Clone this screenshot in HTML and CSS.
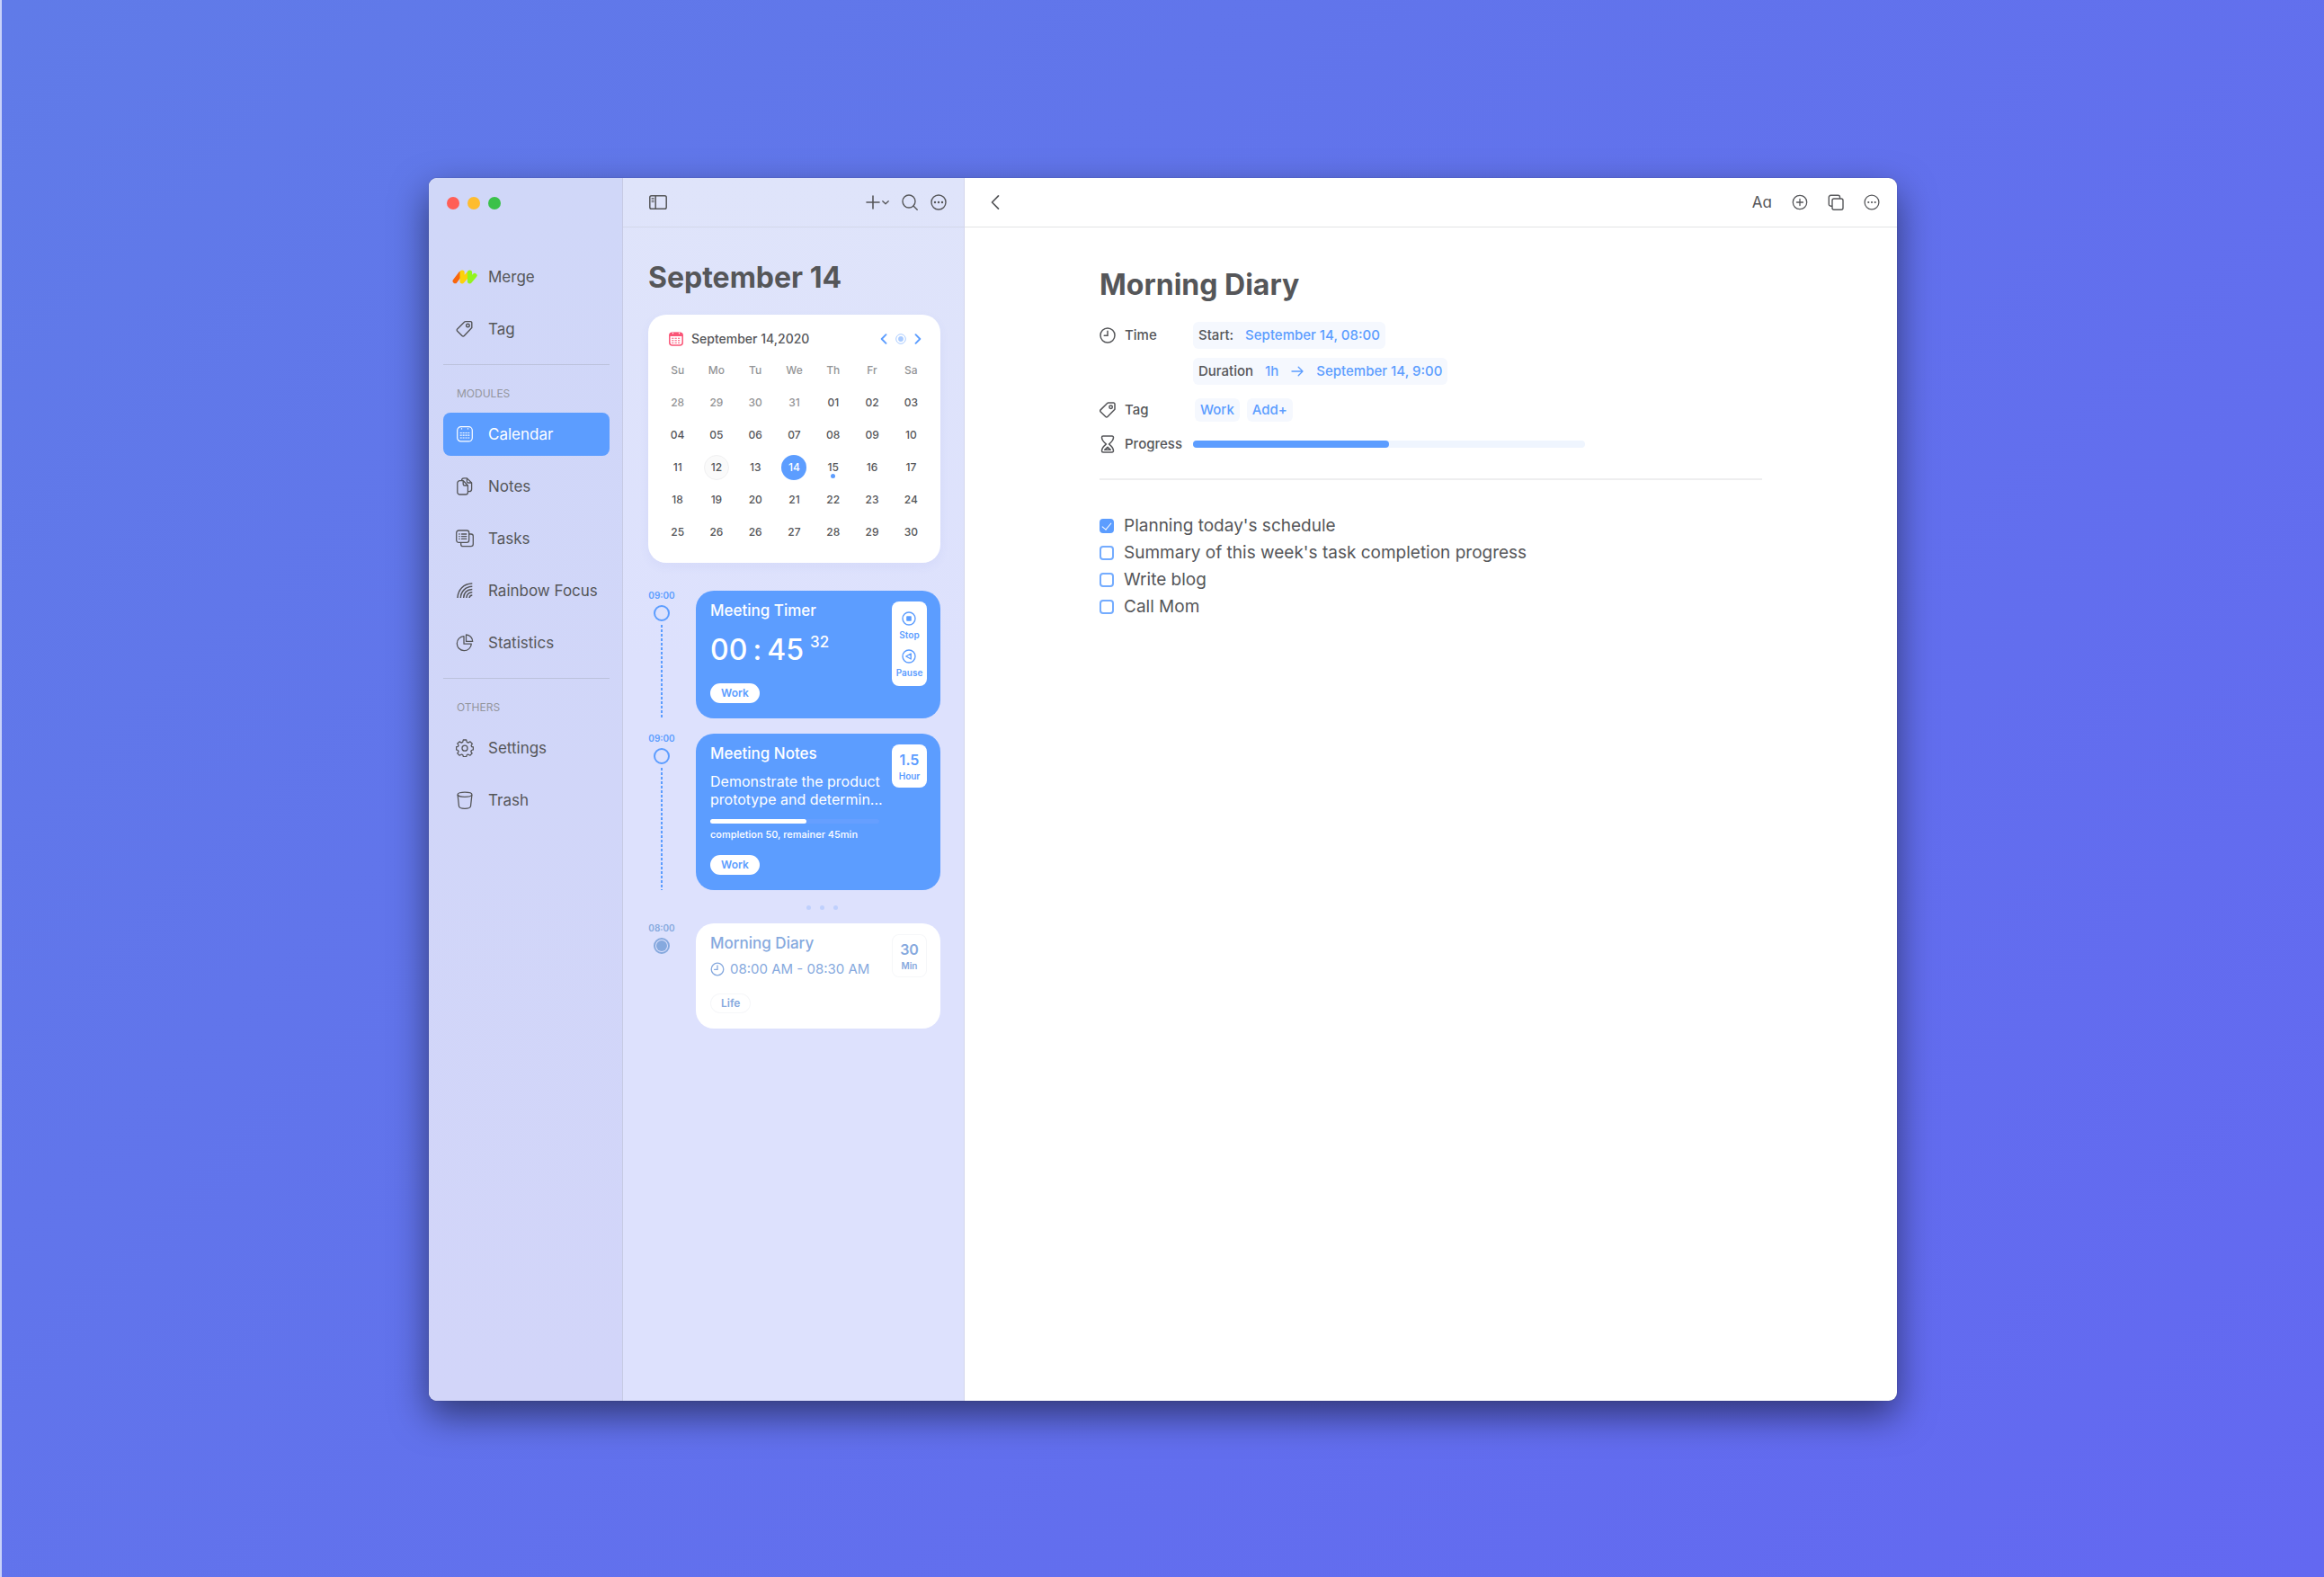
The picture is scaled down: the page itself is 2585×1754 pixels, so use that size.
FILE: index.html
```
<!DOCTYPE html>
<html lang="en">
<head>
<meta charset="utf-8">
<meta name="viewport" content="width=device-width, initial-scale=1">
<title>Morning Diary</title>
<link rel="stylesheet" href="styles.css">
</head>
<body>
<div class="window">
  <aside class="sidebar">
    <div class="window-controls">
      <button class="light light-close" aria-label="Close"></button>
      <button class="light light-minimize" aria-label="Minimize"></button>
      <button class="light light-zoom" aria-label="Zoom"></button>
    </div>
    <nav class="nav">
      <ul class="nav-list">
        <li><a class="nav-item" href="#merge">
          <span class="nav-icon"><svg class="logo" width="28" height="16" viewBox="0 0 28 16" fill="none" stroke-width="5.2" stroke-linecap="round" stroke-linejoin="round"><path stroke="#f9660d" d="M3.2 12.6 9.4 4.4"/><path stroke="#fcd20a" d="M11.1 3v9.8L18.4 4.4"/><path stroke="#93f41f" d="M19.5 3v9.8L25 6.4"/></svg></span>Merge</a></li>
        <li><a class="nav-item" href="#tag">
          <span class="nav-icon"><svg width="20" height="20" viewBox="0 0 20 20" fill="none" stroke="currentColor" stroke-width="1.4" stroke-linejoin="round"><path d="M11 1.6h5.400a1.400 1.400 0 0 1 1.400 1.400v5.600L9.300 17.500a1.600 1.600 0 0 1-2.300 0L1.700 12.200a1.600 1.600 0 0 1 0-2.300L9.700 2.100A1.800 1.800 0 0 1 11 1.600z"/><circle cx="13.400" cy="6" r="1.800"/></svg></span>Tag</a></li>
      </ul>
      <hr class="nav-divider">
      <h2 class="nav-heading">MODULES</h2>
      <ul class="nav-list">
        <li><a class="nav-item nav-item-active" href="#calendar" aria-current="page">
          <span class="nav-icon"><svg width="20" height="20" viewBox="0 0 20 20" fill="none" stroke="currentColor" stroke-width="1.200"><rect x="1.700" y="1.700" width="16.600" height="16.200" rx="4"/><path d="M6.500 3.200v1.400M13.500 3.200v1.400"/><path d="M4.700 8.500h10.600M4.700 11.200h10.600M4.700 14h10.600" stroke-dasharray="2 .9"/></svg></span>Calendar</a></li>
        <li><a class="nav-item" href="#notes">
          <span class="nav-icon"><svg width="20" height="20" viewBox="0 0 20 20" fill="none" stroke="currentColor" stroke-width="1.300" stroke-linejoin="round"><path d="M4.400 3.700h4L13.400 9v7.400a2.600 2.600 0 0 1-2.600 2.600H4.400a2.600 2.600 0 0 1-2.600-2.600V6.300a2.600 2.600 0 0 1 2.600-2.600z"/><path d="M8.200 3.900v3.500A1.600 1.600 0 0 0 9.800 9h3.400"/><path d="M6.500 3.500C6.600 1.900 7.400.9 9 .9h3.400L17.600 6v7c0 1.800-.9 2.700-2.700 2.700h-1.300"/><path d="M12.400 1.100v3.300A1.600 1.600 0 0 0 14 6h3.400"/></svg></span>Notes</a></li>
        <li><a class="nav-item" href="#tasks">
          <span class="nav-icon"><svg width="20" height="20" viewBox="0 0 20 20" fill="none" stroke="currentColor" stroke-width="1.300" stroke-linecap="round"><rect x=".7" y="1" width="14" height="13.400" rx="2.600"/><path d="M14.900 5H17a2.300 2.300 0 0 1 2.300 2.300v9A2.400 2.400 0 0 1 16.900 18.700H8a2.300 2.300 0 0 1-2.300-2.300v-1.800"/><path d="M6.500 5h5.300M6.500 7.700h5.300M6.500 10.400h5.300M3.800 5h.4M3.800 7.700h.4M3.800 10.400h.4"/></svg></span>Tasks</a></li>
        <li><a class="nav-item" href="#rainbow-focus">
          <span class="nav-icon"><svg width="20" height="20" viewBox="0 0 20 20" fill="none" stroke="currentColor" stroke-width="1.500"><path d="M2 18C2.400 9 8.500 2.300 18.300 2"/><path d="M5.300 18C5.700 11 10.500 5.600 18.300 5.300"/><path d="M8.600 18c.4-5.500 4-9.100 9.700-9.400"/><path d="M11.800 18c.3-3.600 2.600-6 6.500-6.200"/><path d="M15 18c.2-1.900 1.400-3 3.300-3.100"/></svg></span>Rainbow Focus</a></li>
        <li><a class="nav-item" href="#statistics">
          <span class="nav-icon"><svg width="20" height="20" viewBox="0 0 20 20" fill="none" stroke="currentColor" stroke-width="1.300" stroke-linejoin="round"><path d="M9 2.700A8 8 0 1 0 17.300 11.200H9z"/><path d="M11.500 1v7.400h7.200A7.500 7.500 0 0 0 11.500 1z"/></svg></span>Statistics</a></li>
      </ul>
      <hr class="nav-divider">
      <h2 class="nav-heading">OTHERS</h2>
      <ul class="nav-list">
        <li><a class="nav-item" href="#settings">
          <span class="nav-icon"><svg width="20" height="20" viewBox="0 0 20 20" fill="none" stroke="currentColor" stroke-width="1.300" stroke-linejoin="round"><path d="M8.300 1h3.400l.6 2.400 1.500.7 2.200-1.200L18.300 5.200 17.100 7.300l.5 1.200 1.800.3v3.100l-2 .6-.6 1.400 1.300 2-2.300 2.300-2.200-1.200-1.300.6-.6 2H8.400l-.6-2-1.400-.6-2.200 1.200-2.400-2.300 1.300-2-.6-1.400L.6 11.900V8.700l1.900-.4.6-1.300-1.300-2L4.100 2.900l2.200 1.200 1.400-.7z"/><circle cx="10" cy="10.200" r="3"/></svg></span>Settings</a></li>
        <li><a class="nav-item" href="#trash">
          <span class="nav-icon"><svg width="20" height="20" viewBox="0 0 20 20" fill="none" stroke="currentColor" stroke-width="1.300"><ellipse cx="10" cy="3.700" rx="7.900" ry="2.600"/><path d="M2.100 3.900 3.500 16.800C3.700 18.600 6 19.300 10 19.300s6.300-.7 6.500-2.500L17.900 3.900"/></svg></span>Trash</a></li>
      </ul>
    </nav>
  </aside>

  <section class="panel">
    <header class="toolbar panel-toolbar">
      <button class="icon-button push-right" aria-label="Toggle sidebar"><svg width="20" height="16" viewBox="0 0 20 16" fill="none" stroke="currentColor" stroke-width="1.500"><rect x=".8" y=".8" width="18.400" height="14.400" rx="1.800"/><path d="M7.200 1v14"/><path stroke-width="1" d="M2.600 3.500h3M2.600 5.500h3M2.600 7.500h3"/></svg></button>
      <button class="icon-button" aria-label="Add"><svg width="26" height="16" viewBox="0 0 26 16" fill="none" stroke="currentColor" stroke-width="1.600" stroke-linecap="round"><path d="M1 8h14M8 1v14"/><path stroke-width="1.300" stroke-linejoin="round" d="m18.800 6.700 3.200 3.100 3.200-3.100"/></svg></button>
      <button class="icon-button" aria-label="Search"><svg width="18" height="18" viewBox="0 0 18 18" fill="none" stroke="currentColor" stroke-width="1.400" stroke-linecap="round"><circle cx="8" cy="8" r="7"/><path d="m13.200 13.200 4 4"/></svg></button>
      <button class="icon-button" aria-label="More"><svg width="18" height="18" viewBox="0 0 18 18" fill="none" stroke="currentColor" stroke-width="1.400"><circle cx="9" cy="9" r="8"/><g fill="currentColor" stroke="none"><circle cx="5" cy="9" r="1.200"/><circle cx="9" cy="9" r="1.200"/><circle cx="13" cy="9" r="1.200"/></g></svg></button>
    </header>
    <div class="panel-body">
      <h1 class="page-title">September 14</h1>

      <section class="calendar">
        <header class="calendar-header">
          <svg width="16" height="16" viewBox="0 0 16 16" fill="none"><rect x=".8" y="1.200" width="14.400" height="13.800" rx="3" stroke="#fa5577" stroke-width="1.500"/><path fill="#fa5577" d="M.8 5V3.200C.8 1.500 1.900.7 3.500.7h9c1.600 0 2.700.8 2.700 2.500V5z"/><path stroke="#fff" stroke-width="1.200" stroke-linecap="round" d="M4.500 1.300v.5M11.500 1.300v.5"/><path stroke="#fa5577" stroke-width="1.100" stroke-dasharray="2.200 1.200" d="M3.200 7.200h9.600M3.200 9.700h9.600M3.200 12.200h9.600"/></svg>
          <h2 class="calendar-title">September 14,2020</h2>
          <button class="icon-button accent" aria-label="Previous month"><svg width="8" height="12" viewBox="0 0 8 12" fill="none" stroke="currentColor" stroke-width="1.900" stroke-linecap="round" stroke-linejoin="round"><path d="M6.500 1.200 1.700 6l4.800 4.800"/></svg></button>
          <button class="icon-button faint" aria-label="Today"><svg width="12" height="12" viewBox="0 0 12 12"><circle cx="6" cy="6" r="5.300" fill="none" stroke="currentColor"/><circle cx="6" cy="6" r="2.900" fill="currentColor"/></svg></button>
          <button class="icon-button accent" aria-label="Next month"><svg width="8" height="12" viewBox="0 0 8 12" fill="none" stroke="currentColor" stroke-width="1.900" stroke-linecap="round" stroke-linejoin="round"><path d="M1.500 1.200 6.300 6l-4.800 4.800"/></svg></button>
        </header>
        <table class="month">
          <thead>
            <tr><th>Su</th><th>Mo</th><th>Tu</th><th>We</th><th>Th</th><th>Fr</th><th>Sa</th></tr>
          </thead>
          <tbody>
            <tr><td class="outside">28</td><td class="outside">29</td><td class="outside">30</td><td class="outside">31</td><td>01</td><td>02</td><td>03</td></tr>
            <tr><td>04</td><td>05</td><td>06</td><td>07</td><td>08</td><td>09</td><td>10</td></tr>
            <tr><td>11</td><td><span class="day day-hover">12</span></td><td>13</td><td><span class="day day-selected">14</span></td><td><span class="day day-event">15</span></td><td>16</td><td>17</td></tr>
            <tr><td>18</td><td>19</td><td>20</td><td>21</td><td>22</td><td>23</td><td>24</td></tr>
            <tr><td>25</td><td>26</td><td>26</td><td>27</td><td>28</td><td>29</td><td>30</td></tr>
          </tbody>
        </table>
      </section>

      <div class="timeline">
        <div class="entry">
          <div class="track"><time class="track-time">09:00</time><span class="track-ring"></span><span class="track-line"></span></div>
          <article class="card">
            <div class="card-main">
              <h3 class="card-title">Meeting Timer</h3>
              <p class="timer"><span>00</span><span class="timer-colon">:</span><span>45</span><span class="timer-seconds">32</span></p>
              <span class="pill">Work</span>
            </div>
            <div class="badge timer-actions">
              <button class="timer-button"><svg width="16" height="16" viewBox="0 0 16 16" fill="none" stroke="currentColor" stroke-width="1.400"><circle cx="8" cy="8" r="7"/><rect x="5.200" y="5.200" width="5.600" height="5.600" rx=".8" fill="currentColor" stroke="none"/></svg>Stop</button>
              <button class="timer-button"><svg width="16" height="16" viewBox="0 0 16 16" fill="none" stroke="currentColor" stroke-width="1.400" stroke-linejoin="round"><circle cx="8" cy="8" r="7"/><path d="M10.200 5v6L4.800 8z"/></svg>Pause</button>
            </div>
          </article>
        </div>

        <div class="entry">
          <div class="track"><time class="track-time">09:00</time><span class="track-ring"></span><span class="track-line"></span></div>
          <article class="card">
            <div class="card-main">
              <h3 class="card-title">Meeting Notes</h3>
              <p class="card-text">Demonstrate the product prototype and determin...</p>
              <div class="card-progress" role="progressbar" aria-label="Completion" aria-valuenow="57" aria-valuemin="0" aria-valuemax="100"><span class="card-progress-fill" style="width: 57%"></span></div>
              <p class="card-caption">completion 50, remainer 45min</p>
              <span class="pill">Work</span>
            </div>
            <div class="badge"><strong class="badge-value">1.5</strong><span class="badge-unit">Hour</span></div>
          </article>
        </div>

        <div class="more-dots"><span class="dot"></span><span class="dot"></span><span class="dot"></span></div>

        <div class="entry entry-muted">
          <div class="track"><time class="track-time">08:00</time><span class="track-ring track-ring-filled"></span></div>
          <article class="card">
            <div class="card-main">
              <h3 class="card-title">Morning Diary</h3>
              <p class="card-time"><svg width="16" height="16" viewBox="0 0 16 16" fill="none" stroke="currentColor" stroke-width="1.300" stroke-linecap="round"><circle cx="8" cy="8" r="6.800"/><path d="M8 4v4.300H4.600"/></svg>08:00 AM - 08:30 AM</p>
              <span class="pill">Life</span>
            </div>
            <div class="badge"><strong class="badge-value">30</strong><span class="badge-unit">Min</span></div>
          </article>
        </div>
      </div>
    </div>
  </section>

  <main class="editor">
    <header class="toolbar editor-toolbar">
      <button class="icon-button push-right" aria-label="Back"><svg width="12" height="18" viewBox="0 0 12 18" fill="none" stroke="currentColor" stroke-width="1.700" stroke-linecap="round" stroke-linejoin="round"><path d="M9.500 1.800 2.500 9l7 7.200"/></svg></button>
      <button class="icon-button text-style" aria-label="Text style">Aɑ</button>
      <button class="icon-button" aria-label="Add"><svg width="18" height="18" viewBox="0 0 18 18" fill="none" stroke="currentColor" stroke-width="1.300" stroke-linecap="round"><circle cx="9" cy="9" r="7.700"/><path d="M5.500 9h7M9 5.500v7"/></svg></button>
      <button class="icon-button" aria-label="Copy"><svg width="18" height="18" viewBox="0 0 18 18" fill="none" stroke="currentColor" stroke-width="1.400"><rect x="5" y="5" width="12" height="12.200" rx="2"/><path d="M5 13.200H3.300a2 2 0 0 1-2-2V3.300a2 2 0 0 1 2-2h8.200a2 2 0 0 1 2 2V5"/></svg></button>
      <button class="icon-button" aria-label="More"><svg width="18" height="18" viewBox="0 0 18 18" fill="none" stroke="currentColor" stroke-width="1.300"><circle cx="9" cy="9" r="7.900"/><g fill="currentColor" stroke="none"><circle cx="5.300" cy="9" r="1.100"/><circle cx="9" cy="9" r="1.100"/><circle cx="12.700" cy="9" r="1.100"/></g></svg></button>
    </header>
    <article class="entry-page">
      <h1 class="page-title">Morning Diary</h1>
      <dl class="details">
        <dt class="detail-label detail-label-top"><svg width="18" height="18" viewBox="0 0 18 18" fill="none" stroke="currentColor" stroke-width="1.500" stroke-linecap="round"><circle cx="9" cy="9" r="8"/><path d="M9 4.300v5H5.200"/></svg>Time</dt>
        <dd class="detail-times">
          <button class="chip">Start: <span class="accent">September 14, 08:00</span></button>
          <button class="chip">Duration <span class="accent">1h</span><svg class="accent" width="16" height="12" viewBox="0 0 16 12" fill="none" stroke="currentColor" stroke-width="1.300" stroke-linecap="round" stroke-linejoin="round"><path d="M2 6h12M9.200 1.200 14 6l-4.800 4.800"/></svg><span class="accent">September 14, 9:00</span></button>
        </dd>
        <dt class="detail-label"><svg width="18" height="20" viewBox="0 0 20 20" fill="none" stroke="currentColor" stroke-width="1.700" stroke-linejoin="round"><path d="M11 1.200h6A1.600 1.600 0 0 1 18.900 3v6.200L9.900 18.400a1.600 1.600 0 0 1-2.300 0L1.300 12.200a1.600 1.600 0 0 1 0-2.300L9.600 1.700A1.900 1.900 0 0 1 11 1.200z"/><circle cx="14" cy="6.400" r="1.900"/></svg>Tag</dt>
        <dd class="detail-tags"><button class="chip chip-tag">Work</button><button class="chip chip-tag">Add+</button></dd>
        <dt class="detail-label"><svg width="18" height="20" viewBox="0 0 18 20" fill="none" stroke="currentColor" stroke-width="1.500" stroke-linejoin="round"><path d="M4 1h10a1.500 1.500 0 0 1 1.500 1.500C15.500 6 13.300 7.700 10.500 10c2.800 2.300 5 4 5 7.500A1.500 1.500 0 0 1 14 19H4a1.500 1.500 0 0 1-1.500-1.500C2.500 14 4.700 12.300 7.500 10 4.700 7.700 2.500 6 2.500 2.500A1.500 1.500 0 0 1 4 1z"/><path d="M5.700 16.300h6.600L9 13.300z"/></svg>Progress</dt>
        <dd><div class="progress" role="progressbar" aria-label="Progress" aria-valuenow="50" aria-valuemin="0" aria-valuemax="100"><span class="progress-fill" style="width: 50%"></span></div></dd>
      </dl>
      <ul class="checklist">
        <li><label class="check-row"><input class="check" type="checkbox" checked>Planning today's schedule</label></li>
        <li><label class="check-row"><input class="check" type="checkbox">Summary of this week's task completion progress</label></li>
        <li><label class="check-row"><input class="check" type="checkbox">Write blog</label></li>
        <li><label class="check-row"><input class="check" type="checkbox">Call Mom</label></li>
      </ul>
    </article>
  </main>
</div>
</body>
</html>
```
FILE: styles.css
```
:root {
  --accent: #5c9dff;
  --muted-blue: #86a9de;
  --text: #555659;
  --line: #e3e4e6;
  --chip: #f5f8fe;
}

* {
  box-sizing: border-box;
}

body {
  display: flex;
  min-height: 100vh;
  margin: 0;
  padding: 198px 475px 196px;
  border-left: 2px solid #c8d2fa;
  background: linear-gradient(135deg, #607be8, #6368f1);
  color: var(--text);
  font: 400 15px/20px Inter, "Liberation Sans", sans-serif;
}

h1, h2, h3, p, ul, dl, dd {
  margin: 0;
  padding: 0;
}

ul {
  list-style: none;
}

button {
  margin: 0;
  padding: 0;
  border: 0;
  background: none;
  color: inherit;
  font: inherit;
}

svg {
  display: block;
  flex: none;
}

.accent {
  color: var(--accent);
}

.faint {
  color: #a9cbff;
}

.window {
  display: flex;
  flex: 1;
  overflow: hidden;
  border-radius: 9px;
  background: #fff;
  box-shadow: 0 0 1px rgba(0, 0, 0, 0.5), 0 16px 40px rgba(0, 0, 0, 0.5);
}

/* Sidebar */

.sidebar {
  flex: none;
  width: 216px;
  padding: 0 14px 0 16px;
  border-right: 1px solid #c6cae3;
  background: linear-gradient(#d0d7f8, #d2d5f9);
}

.window-controls {
  display: flex;
  align-items: center;
  gap: 9px;
  height: 55px;
  padding-left: 4px;
}

.light {
  width: 14px;
  height: 14px;
  border-radius: 50%;
}

.light-close {
  background: #ff5f57;
}

.light-minimize {
  background: #febc2e;
}

.light-zoom {
  background: #3bc14a;
}

.nav {
  padding-top: 31px;
}

.nav-list {
  display: grid;
  gap: 10px;
}

.nav-item {
  display: flex;
  align-items: center;
  gap: 14px;
  height: 48px;
  padding-left: 12px;
  border-radius: 8px;
  color: var(--text);
  font-size: 17px;
  text-decoration: none;
  white-space: nowrap;
}

.nav-item-active {
  background: var(--accent);
  color: #fff;
}

.nav-icon {
  display: flex;
  justify-content: center;
  width: 24px;
}

.nav-divider {
  height: 1px;
  margin: 15px 0 0;
  border: 0;
  background: #bcc2dc;
}

.nav-heading {
  padding: 22px 15px 11px;
  color: #93959d;
  font-size: 12px;
  font-weight: 400;
}

/* Toolbars */

.toolbar {
  display: flex;
  align-items: center;
  height: 55px;
  border-bottom: 1px solid var(--line);
}

.icon-button {
  display: flex;
}

.push-right {
  margin-right: auto;
}

.panel-toolbar {
  gap: 14px;
  padding: 0 19px 0 29px;
  border-color: #d3d7ea;
}

.editor-toolbar {
  gap: 22px;
  padding: 0 19px 0 28px;
}

.text-style {
  font-size: 17px;
}

/* Calendar panel */

.panel {
  flex: none;
  width: 380px;
  border-right: 1px solid #d3d6ec;
  background: linear-gradient(#dfe4fa, #dde1fd 40%);
}

.panel-body {
  padding: 36px 26px 40px 28px;
}

.page-title {
  font-size: 32px;
  font-weight: 700;
  line-height: 40px;
}

.calendar {
  margin-top: 21px;
  padding: 4px 11px 16px;
  border-radius: 20px;
  background: #fff;
  box-shadow: 0 4px 12px rgba(90, 110, 200, 0.06);
}

.calendar-header {
  display: flex;
  align-items: center;
  gap: 9px;
  height: 40px;
  padding: 5px 10px 0 12px;
}

.calendar-title {
  margin-right: auto;
  font-size: 14px;
  font-weight: 500;
}

.month {
  width: 100%;
  border-spacing: 0;
  table-layout: fixed;
  font-size: 12px;
  font-weight: 500;
  text-align: center;
}

.month th,
.month td {
  height: 36px;
  padding: 0;
}

.month th {
  color: #939496;
  font-weight: 500;
}

.month .outside {
  color: #939496;
}

.day {
  display: grid;
  place-items: center;
  position: relative;
  width: 28px;
  height: 28px;
  margin: 0 auto;
  border-radius: 50%;
}

.day-hover {
  border: 1px solid #f0f0f1;
  background: #fafafa;
}

.day-selected {
  background: var(--accent);
  color: #fff;
}

.day-event::after {
  content: "";
  position: absolute;
  bottom: 2px;
  width: 5px;
  height: 5px;
  border-radius: 50%;
  background: var(--accent);
}

/* Timeline */

.timeline {
  display: grid;
  gap: 17px;
  margin-top: 31px;
  color: var(--accent);
}

.entry {
  display: grid;
  grid-template-columns: 30px 1fr;
  gap: 23px;
}

.entry-muted {
  color: var(--muted-blue);
}

.track {
  display: flex;
  flex-direction: column;
  align-items: center;
}

.track-time {
  margin-bottom: 6px;
  font-size: 10px;
  font-weight: 600;
  line-height: 10px;
}

.track-ring {
  width: 18px;
  height: 18px;
  border: 2px solid currentColor;
  border-radius: 50%;
}

.track-ring-filled {
  display: grid;
  padding: 1px;
}

.track-ring-filled::after {
  content: "";
  border-radius: 50%;
  background: currentColor;
}

.track-line {
  flex: 1;
  width: 2px;
  margin-top: 4px;
  background: repeating-linear-gradient(currentColor 0 3px, transparent 3px 5px);
}

.card {
  display: flex;
  align-items: flex-start;
  justify-content: space-between;
  padding: 12px 15px 17px 16px;
  border-radius: 20px;
  background: var(--accent);
  color: #fff;
}

.entry-muted .card {
  background: #fff;
  color: var(--muted-blue);
}

.card-main {
  flex: 1;
}

.card-title {
  font-size: 17px;
  font-weight: 500;
}

.timer {
  display: flex;
  margin-top: 14px;
  font-size: 32px;
  font-weight: 500;
  line-height: 40px;
}

.timer-colon {
  width: 22px;
  text-align: center;
}

.timer-seconds {
  margin-left: 7px;
  font-size: 17px;
  line-height: 22px;
}

.pill {
  display: inline-flex;
  align-items: center;
  height: 22px;
  margin-top: 17px;
  padding: 0 12px;
  border-radius: 11px;
  background: #fff;
  color: var(--accent);
  font-size: 12px;
  font-weight: 600;
  vertical-align: top;
}

.badge {
  display: flex;
  flex: none;
  flex-direction: column;
  align-items: center;
  gap: 2px;
  width: 39px;
  padding: 7px 0;
  border-radius: 8px;
  background: #fff;
  color: var(--accent);
}

.entry-muted .pill,
.entry-muted .badge {
  color: var(--muted-blue);
  box-shadow: inset 0 0 0 1px #f6f7f9;
}

.badge-value {
  font-size: 16px;
  font-weight: 600;
}

.badge-unit,
.timer-button {
  font-size: 10px;
  font-weight: 600;
  line-height: 12px;
}

.timer-actions {
  gap: 10px;
  padding: 11px 0 9px;
}

.timer-button {
  display: grid;
  justify-items: center;
  gap: 4px;
}

.card-text {
  margin-top: 11px;
  font-size: 16px;
}

.card-progress {
  display: flex;
  height: 5px;
  margin: 12px 14px 0 0;
  border-radius: 3px;
  background: #669fff;
}

.card-progress-fill {
  border-radius: 3px;
  background: #fff;
}

.card-caption {
  margin-top: 6px;
  font-size: 11px;
  font-weight: 500;
  line-height: 12px;
  white-space: nowrap;
}

.card-time {
  display: flex;
  align-items: center;
  gap: 6px;
  margin-top: 9px;
  white-space: nowrap;
}

.more-dots {
  display: flex;
  justify-content: center;
  gap: 10px;
  height: 3px;
  padding-left: 61px;
}

.dot {
  flex: none;
  width: 5px;
  height: 5px;
  border-radius: 50%;
  background: #bfd0fd;
}

/* Editor */

.editor {
  flex: 1;
  min-width: 0;
}

.entry-page {
  padding: 44px 150px;
}

.details {
  display: grid;
  grid-template-columns: 104px 1fr;
  row-gap: 15px;
  margin-top: 21px;
  padding-bottom: 28px;
  border-bottom: 2px solid #eeeeef;
  font-weight: 500;
}

.detail-label {
  display: flex;
  align-items: center;
  gap: 10px;
}

.detail-label-top {
  align-self: start;
  height: 30px;
}

.detail-times {
  display: grid;
  justify-items: start;
  gap: 10px;
}

.chip {
  display: flex;
  align-items: center;
  gap: 13px;
  height: 30px;
  padding: 0 6px;
  border-radius: 6px;
  background: var(--chip);
}

.detail-tags {
  display: flex;
  gap: 8px;
  padding-left: 2px;
}

.chip-tag {
  height: 26px;
  color: var(--accent);
}

.progress {
  display: flex;
  width: 100%;
  max-width: 436px;
  height: 8px;
  margin: 6px 0;
  border-radius: 4px;
  background: #eff5fe;
}

.progress-fill {
  border-radius: 4px;
  background: var(--accent);
}

.checklist {
  margin-top: 36px;
  font-size: 19px;
}

.check-row {
  display: flex;
  align-items: center;
  gap: 11px;
  height: 30px;
}

.check {
  appearance: none;
  display: grid;
  place-items: center;
  width: 16px;
  height: 16px;
  margin: 0;
  border: 2px solid #74acff;
  border-radius: 4px;
}

.check:checked {
  border-color: var(--accent);
  background: var(--accent);
}

.check:checked::after {
  content: "";
  width: 5px;
  height: 9px;
  margin-bottom: 3px;
  border: solid #fff;
  border-width: 0 1px 1px 0;
  rotate: 40deg;
}
```
